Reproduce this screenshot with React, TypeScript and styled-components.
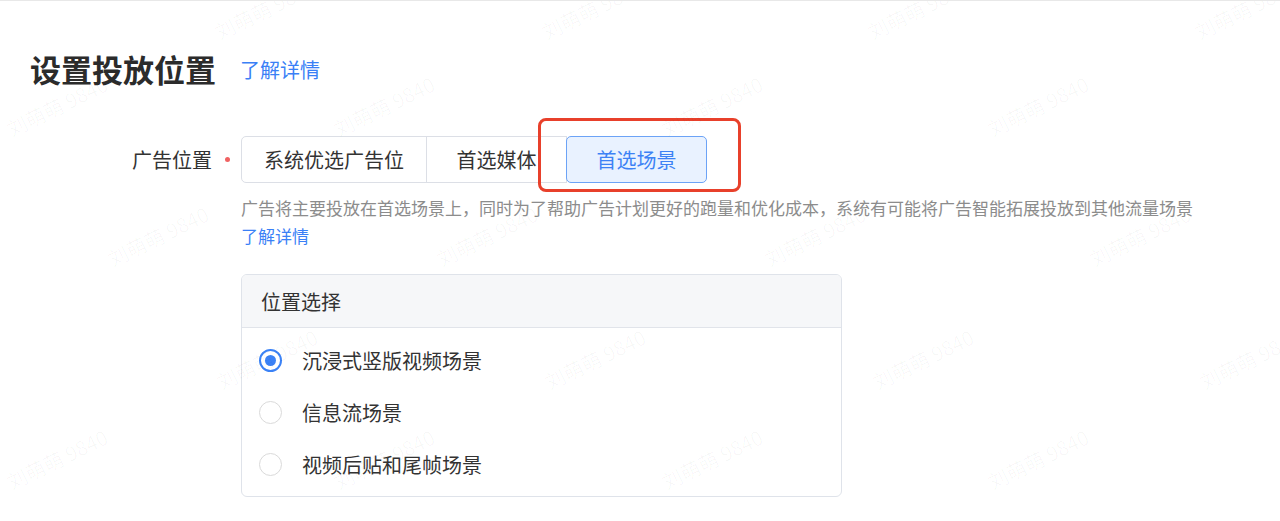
import React, { useState } from 'react';
import styled, { createGlobalStyle } from 'styled-components';

const GlobalStyle = createGlobalStyle`
  html, body {
    margin: 0;
    padding: 0;
    background: #fff;
  }

  body {
    font-family: "Noto Sans CJK SC", "Noto Sans", sans-serif;
    color: #333;
  }

  * {
    box-sizing: border-box;
  }
`;

const Page = styled.div`
  position: relative;
  min-height: 100vh;
  overflow: hidden;
  border-top: 1px solid #e8e8e8;
`;

const Header = styled.header`
  display: flex;
  align-items: center;
  gap: 24px;
  padding: 48px 0 0 30px;
`;

const Title = styled.h1`
  margin: 0;
  font-size: 31px;
  line-height: 40px;
  font-weight: 700;
  color: #2b2b2b;
`;

const Link = styled.a<{ $size?: number; $block?: boolean }>`
  display: ${({ $block }) => ($block ? 'block' : 'inline')};
  font-size: ${({ $size }) => $size ?? 17}px;
  color: #3a80f6;
  text-decoration: none;
  cursor: pointer;
`;

const FormItem = styled.div`
  display: flex;
  align-items: flex-start;
  margin-top: 47px;
`;

const LabelCell = styled.div`
  width: 241px;
  height: 47px;
  display: flex;
  align-items: center;
  justify-content: flex-end;
  gap: 13px;
  padding-right: 11px;
  font-size: 20px;
  color: #333;
`;

const RequiredDot = styled.span`
  width: 5px;
  height: 5px;
  border-radius: 50%;
  background: #f06262;
`;

const Content = styled.div`
  display: flex;
  flex-direction: column;
  align-items: flex-start;
`;

const Segmented = styled.div`
  display: flex;
`;

const Segment = styled.button<{ $active: boolean; $highlight?: boolean }>`
  position: relative;
  height: 47px;
  min-width: 141px;
  padding: 0 22px;
  margin-left: -1px;
  font-family: inherit;
  font-size: 20px;
  line-height: 1;
  background: ${({ $active }) => ($active ? '#e9f2ff' : '#fff')};
  color: ${({ $active }) => ($active ? '#3d82f5' : '#333')};
  border: 1px solid ${({ $active }) => ($active ? '#6ca3f6' : '#dcdfe6')};
  border-radius: ${({ $active }) => ($active ? '5px' : '0')};
  z-index: ${({ $active }) => ($active ? 1 : 0)};
  cursor: pointer;

  &:first-child {
    margin-left: 0;
    border-radius: 5px 0 0 5px;
  }

  &:last-child {
    border-radius: ${({ $active }) => ($active ? '5px' : '0 5px 5px 0')};
  }

  ${({ $highlight }) =>
    $highlight &&
    `
    &::after {
      content: '';
      position: absolute;
      top: -19px;
      left: -29px;
      right: -35px;
      bottom: -10px;
      border: 3px solid #e8402b;
      border-radius: 8px;
      pointer-events: none;
    }
  `}
`;

const Description = styled.div`
  margin-top: 11px;
  font-size: 17px;
  line-height: 28px;
  color: #8c8c8c;
`;

const Panel = styled.section`
  margin-top: 24px;
  width: 601px;
  border: 1px solid #dfe3ea;
  border-radius: 6px;
  overflow: hidden;
`;

const PanelHeader = styled.div`
  height: 53px;
  display: flex;
  align-items: center;
  padding: 0 19px;
  background: #f6f7f9;
  border-bottom: 1px solid #e1e4ea;
  font-size: 20px;
  color: #333;
`;

const PanelBody = styled.div`
  padding: 6px 0;
`;

const RadioRow = styled.label`
  height: 52px;
  display: flex;
  align-items: center;
  gap: 20px;
  padding-left: 17px;
  font-size: 20px;
  color: #333;
  cursor: pointer;
`;

const RadioCircle = styled.span<{ $checked: boolean }>`
  width: 23px;
  height: 23px;
  flex-shrink: 0;
  border-radius: 50%;
  display: flex;
  align-items: center;
  justify-content: center;
  border: ${({ $checked }) => ($checked ? '2px solid #3b82f6' : '1.5px solid #dadada')};
  background: #fff;

  &::after {
    content: '';
    width: 11px;
    height: 11px;
    border-radius: 50%;
    background: ${({ $checked }) => ($checked ? '#3b82f6' : 'transparent')};
  }
`;

const WatermarkLayer = styled.div`
  position: absolute;
  inset: 0;
  pointer-events: none;
  z-index: 5;
`;

const Mark = styled.span`
  position: absolute;
  white-space: nowrap;
  font-size: 20px;
  color: rgba(0, 0, 0, 0.03);
  transform: translate(-50%, -50%) rotate(-26deg);
`;

const watermarkRows: [number, number[]][] = [
  [8, [265, 592, 918, 1245]],
  [105, [57, 384, 712, 1038]],
  [235, [158, 487, 815, 1140]],
  [358, [267, 595, 923, 1250]],
  [458, [57, 384, 712, 1038]],
];

const segments = ['系统优选广告位', '首选媒体', '首选场景'];
const scenes = ['沉浸式竖版视频场景', '信息流场景', '视频后贴和尾帧场景'];

const App = () => {
  const [segment, setSegment] = useState(2);
  const [scene, setScene] = useState(0);

  return (
    <Page>
      <GlobalStyle />
      <Header>
        <Title>设置投放位置</Title>
        <Link $size={20}>了解详情</Link>
      </Header>

      <FormItem>
        <LabelCell>
          <span>广告位置</span>
          <RequiredDot />
        </LabelCell>
        <Content>
          <Segmented>
            {segments.map((name, i) => (
              <Segment
                key={name}
                $active={segment === i}
                $highlight={i === 2}
                onClick={() => setSegment(i)}
              >
                {name}
              </Segment>
            ))}
          </Segmented>

          <Description>
            广告将主要投放在首选场景上，同时为了帮助广告计划更好的跑量和优化成本，系统有可能将广告智能拓展投放到其他流量场景
            <Link $block>了解详情</Link>
          </Description>

          <Panel>
            <PanelHeader>位置选择</PanelHeader>
            <PanelBody>
              {scenes.map((name, i) => (
                <RadioRow key={name} onClick={() => setScene(i)}>
                  <RadioCircle $checked={scene === i} />
                  {name}
                </RadioRow>
              ))}
            </PanelBody>
          </Panel>
        </Content>
      </FormItem>

      <WatermarkLayer>
        {watermarkRows.map(([top, xs]) =>
          xs.map((left) => (
            <Mark key={`${top}-${left}`} style={{ top, left }}>
              刘萌萌 9840
            </Mark>
          ))
        )}
      </WatermarkLayer>
    </Page>
  );
};

export default App;
